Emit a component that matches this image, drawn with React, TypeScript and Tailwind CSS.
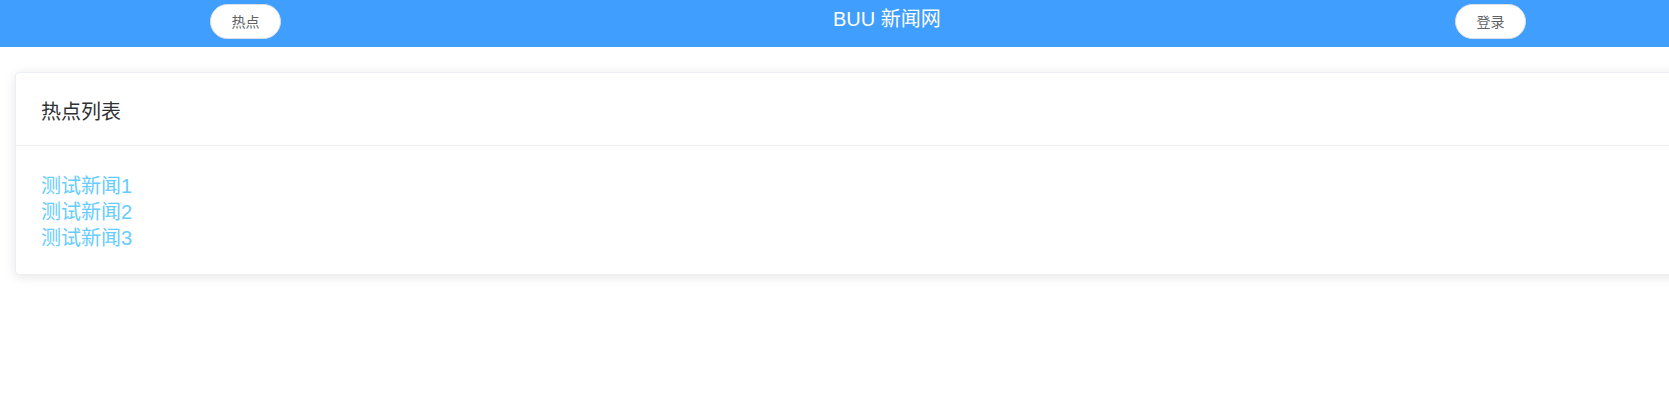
const NEWS = ['测试新闻1', '测试新闻2', '测试新闻3'];

const FONT = "font-['Liberation_Sans','Noto_Sans_CJK_SC',sans-serif]";

function NavButton({ label }: { label: string }) {
  return (
    <button
      className="mt-[4px] w-[71px] h-[35px] rounded-full bg-white border border-[#dcdfe6] text-[14px] leading-none text-[#606266] flex items-center justify-center"
    >
      {label}
    </button>
  );
}

export default function App() {
  return (
    <div className={`w-full min-h-[411px] bg-white overflow-hidden ${FONT}`}>
      {/* top bar */}
      <div className="h-[47px] bg-[#409eff] flex items-start">
        <div className="w-[833px] shrink-0 pl-[210px]">
          <NavButton label="热点" />
        </div>
        <div className="mt-[5px] text-[20px] leading-[28px] text-white whitespace-nowrap">
          BUU 新闻网
        </div>
        <div className="ml-auto mr-[143px]">
          <NavButton label="登录" />
        </div>
      </div>

      {/* hot list card */}
      <div className="mt-[25px] ml-[15px] w-full bg-white border border-[#ebeef5] rounded-[4px] shadow-[0_2px_12px_0_rgba(0,0,0,0.1)]">
        <div className="h-[73px] px-[25px] pt-[5px] flex items-center border-b border-[#ebeef5]">
          <span className="text-[20px] text-[#303133]">热点列表</span>
        </div>
        <div className="px-[25px] pt-[27px] pb-[23px]">
          {NEWS.map((n) => (
            <a key={n} className="block text-[20px] leading-[26px] text-[#66ccff] cursor-pointer">
              {n}
            </a>
          ))}
        </div>
      </div>
    </div>
  );
}
